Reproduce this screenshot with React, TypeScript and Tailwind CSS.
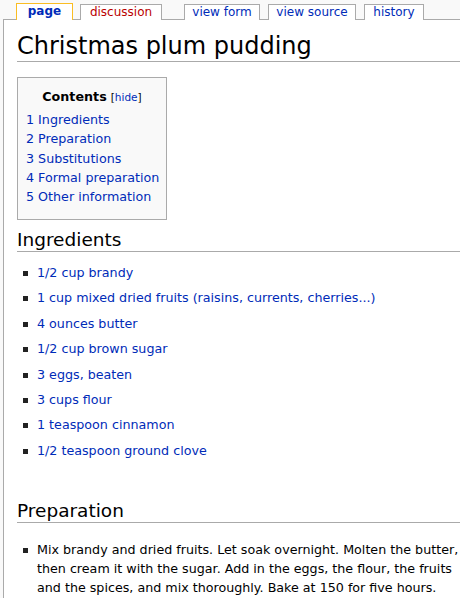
import React from "react";

const font = { fontFamily: '"DejaVu Sans", sans-serif' };

const tabs = [
  { label: "page", w: "w-[57px]", active: true, red: false, ml: "ml-[16px]" },
  { label: "discussion", w: "w-[82px]", active: false, red: true, ml: "ml-[7px]" },
  { label: "view form", w: "w-[76px]", active: false, red: false, ml: "ml-[22px]" },
  { label: "view source", w: "w-[88px]", active: false, red: false, ml: "ml-[8px]" },
  { label: "history", w: "w-[60px]", active: false, red: false, ml: "ml-[8px]" },
];

const toc = [
  "1 Ingredients",
  "2 Preparation",
  "3 Substitutions",
  "4 Formal preparation",
  "5 Other information",
];

const ingredients = [
  "1/2 cup brandy",
  "1 cup mixed dried fruits (raisins, currents, cherries...)",
  "4 ounces butter",
  "1/2 cup brown sugar",
  "3 eggs, beaten",
  "3 cups flour",
  "1 teaspoon cinnamon",
  "1/2 teaspoon ground clove",
];

const Bullet = () => (
  <span className="mt-[8px] mr-[9px] ml-[6px] block w-[5px] h-[5px] bg-[#222] shrink-0" />
);

export default function App() {
  return (
    <div
      className="w-[460px] h-[598px] overflow-hidden bg-[#f9f9f9] text-[12.7px] text-black"
      style={font}
    >
      <div className="flex items-end h-[20px] pt-[4px]">
        {tabs.map((t) => (
          <div
            key={t.label}
            className={`${t.ml} ${t.w} shrink-0 flex justify-center items-start text-[12px] leading-[15px] bg-white border-x border-t ${
              t.active
                ? "border-[#fabd23] font-bold text-[#002bb8] relative z-10 h-[17px]"
                : "border-[#aaa] text-[#002bb8] h-[16px]"
            } ${t.red ? "text-[#ba0000]" : ""}`}
          >
            {t.label}
          </div>
        ))}
      </div>
      <div className="ml-[3px] w-[500px] h-[600px] bg-white border-l border-t border-[#aaa] pl-[13px] -mt-px">
        <h1 className="text-[24px] leading-[26px] pt-[13px] pb-[2px] border-b border-[#aaa] font-normal">
          Christmas plum pudding
        </h1>
        <div className="mt-[15px] w-[150px] h-[143px] bg-[#f9f9f9] border border-[#aaa] pt-[9px] pl-[8px]">
          <div className="text-center pr-[8px] leading-[20px]">
            <span className="font-bold">Contents</span>{" "}
            <span className="text-[10.5px]">
              [<span className="text-[#002bb8]">hide</span>]
            </span>
          </div>
          <div className="mt-[3px] text-[#002bb8]">
            {toc.map((x) => (
              <div key={x} className="h-[19.3px] leading-[19px]">
                {x}
              </div>
            ))}
          </div>
        </div>
        <h2 className="mt-[9px] text-[18.5px] leading-[22px] border-b border-[#aaa] font-normal">
          Ingredients
        </h2>
        <ul className="mt-[11px] text-[#002bb8]">
          {ingredients.map((x) => (
            <li key={x} className="flex h-[25.4px] leading-[19px]">
              <Bullet />
              <span>{x}</span>
            </li>
          ))}
        </ul>
        <h2 className="mt-[34px] text-[18.5px] leading-[22px] border-b border-[#aaa] font-normal">
          Preparation
        </h2>
        <ul className="mt-[17px] w-[446px]">
          <li className="flex leading-[19px]">
            <Bullet />
            <span>
              Mix brandy and dried fruits. Let soak overnight. Molten the butter, then cream it
              with the sugar. Add in the eggs, the flour, the fruits and the spices, and mix
              thoroughly. Bake at 150 for five hours.
            </span>
          </li>
        </ul>
      </div>
    </div>
  );
}
